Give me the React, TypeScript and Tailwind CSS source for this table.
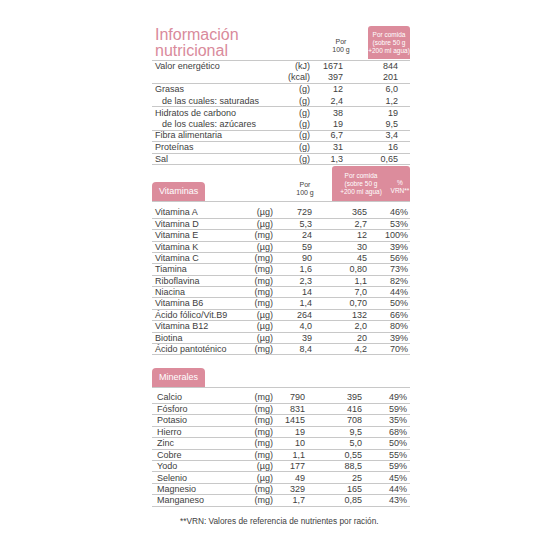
import React from 'react'

type NRow = { label: string; unit: string; per100: string; meal: string; indent?: boolean; line?: boolean }
type VRow = [string, string, string, string, string]

const nutrients: NRow[] = [
  { label: 'Valor energético', unit: '(kJ)', per100: '1671', meal: '844' },
  { label: '', unit: '(kcal)', per100: '397', meal: '201', line: true },
  { label: 'Grasas', unit: '(g)', per100: '12', meal: '6,0' },
  { label: 'de las cuales: saturadas', unit: '(g)', per100: '2,4', meal: '1,2', indent: true, line: true },
  { label: 'Hidratos de carbono', unit: '(g)', per100: '38', meal: '19' },
  { label: 'de los cuales: azúcares', unit: '(g)', per100: '19', meal: '9,5', indent: true, line: true },
  { label: 'Fibra alimentaria', unit: '(g)', per100: '6,7', meal: '3,4', line: true },
  { label: 'Proteínas', unit: '(g)', per100: '31', meal: '16', line: true },
  { label: 'Sal', unit: '(g)', per100: '1,3', meal: '0,65', line: true },
]

const vitamins: VRow[] = [
  ['Vitamina A', '(µg)', '729', '365', '46%'],
  ['Vitamina D', '(µg)', '5,3', '2,7', '53%'],
  ['Vitamina E', '(mg)', '24', '12', '100%'],
  ['Vitamina K', '(µg)', '59', '30', '39%'],
  ['Vitamina C', '(mg)', '90', '45', '56%'],
  ['Tiamina', '(mg)', '1,6', '0,80', '73%'],
  ['Riboflavina', '(mg)', '2,3', '1,1', '82%'],
  ['Niacina', '(mg)', '14', '7,0', '44%'],
  ['Vitamina B6', '(mg)', '1,4', '0,70', '50%'],
  ['Ácido fólico/Vit.B9', '(µg)', '264', '132', '66%'],
  ['Vitamina B12', '(µg)', '4,0', '2,0', '80%'],
  ['Biotina', '(µg)', '39', '20', '39%'],
  ['Ácido pantoténico', '(mg)', '8,4', '4,2', '70%'],
]

const minerals: VRow[] = [
  ['Calcio', '(mg)', '790', '395', '49%'],
  ['Fósforo', '(mg)', '831', '416', '59%'],
  ['Potasio', '(mg)', '1415', '708', '35%'],
  ['Hierro', '(mg)', '19', '9,5', '68%'],
  ['Zinc', '(mg)', '10', '5,0', '50%'],
  ['Cobre', '(mg)', '1,1', '0,55', '55%'],
  ['Yodo', '(µg)', '177', '88,5', '59%'],
  ['Selenio', '(µg)', '49', '25', '45%'],
  ['Magnesio', '(mg)', '329', '165', '44%'],
  ['Manganeso', '(mg)', '1,7', '0,85', '43%'],
]

const Tab = ({ children }: { children: React.ReactNode }) => (
  <div className="w-[53px] h-[19px] self-end rounded-t-[4px] bg-[#dc8c9c] text-white text-[9px] leading-[19px] pl-[7px] font-medium">
    {children}
  </div>
)

export default function App() {
  return (
    <div className="w-[546px] h-[546px] bg-white text-[#3e3e3e] font-['Liberation_Sans',Arial,sans-serif] overflow-hidden">
      <div className="ml-[152px] w-[258px] pt-[26px]">
        {/* Informacion nutricional */}
        <div className="flex h-[35px] border-b border-[#c8c8c8]">
          <div className="flex-1 pl-[3px] pt-[1px] text-[16px] leading-[16px] text-[#d98a9b]">
            Información
            <br />
            nutricional
          </div>
          <div className="w-[26px] self-end mb-[6px] text-center text-[7px] leading-[8px]">
            Por
            <br />
            100 g
          </div>
          <div className="w-[14px]" />
          <div className="w-[42px] h-[33px] rounded-t-[3px] bg-[#dc8c9c] text-white text-[6.5px] leading-[8px] text-center flex flex-col justify-center items-center whitespace-nowrap">
            <span>Por comida</span>
            <span>(sobre 50 g</span>
            <span>+200 ml agua)</span>
          </div>
        </div>
        {nutrients.map((r, i) => (
          <div
            key={i}
            className={`flex h-[11.6px] text-[9px] leading-[11px] items-center ${r.line ? 'border-b border-[#c8c8c8]' : ''}`}
          >
            <div className={`w-[118px] whitespace-nowrap ${r.indent ? 'pl-[10px]' : 'pl-[3px]'}`}>{r.label}</div>
            <div className="w-[40px] text-right">{r.unit}</div>
            <div className="w-[33px] text-right">{r.per100}</div>
            <div className="w-[55px] text-right">{r.meal}</div>
          </div>
        ))}

        {/* Vitaminas */}
        <div className="flex h-[36px] mt-[1px] border-b border-[#c8c8c8]">
          <Tab>Vitaminas</Tab>
          <div className="w-[87px]" />
          <div className="w-[26px] self-end mb-[4px] text-center text-[7px] leading-[8px]">
            Por
            <br />
            100 g
          </div>
          <div className="w-[14px]" />
          <div className="w-[78px] h-full rounded-t-[3px] bg-[#dc8c9c] text-white text-[6.5px] leading-[8px] flex items-center whitespace-nowrap">
            <div className="w-[58px] text-center flex flex-col">
              <span>Por comida</span>
              <span>(sobre 50 g</span>
              <span>+200 ml agua)</span>
            </div>
            <div className="flex-1 text-center flex flex-col pt-[7px]">
              <span>%</span>
              <span>VRN**</span>
            </div>
          </div>
        </div>
        <div className="pt-[5px]">
          {vitamins.map((r, i) => (
            <div key={i} className="flex h-[11.4px] text-[9px] leading-[10.4px] items-center border-b border-[#c8c8c8]">
              <div className="w-[81px] pl-[3px] whitespace-nowrap">{r[0]}</div>
              <div className="w-[40px] text-right">{r[1]}</div>
              <div className="w-[39px] text-right">{r[2]}</div>
              <div className="w-[55px] text-right">{r[3]}</div>
              <div className="w-[41px] text-right">{r[4]}</div>
            </div>
          ))}
        </div>

        {/* Minerales */}
        <div className="flex h-[20px] mt-[13px] border-b border-[#c8c8c8]">
          <Tab>Minerales</Tab>
        </div>
        <div className="pt-[4px]">
          {minerals.map((r, i) => (
            <div key={i} className="flex h-[11.44px] text-[9px] leading-[10.4px] items-center border-b border-[#c8c8c8]">
              <div className="w-[81px] pl-[5px] whitespace-nowrap">{r[0]}</div>
              <div className="w-[40px] text-right">{r[1]}</div>
              <div className="w-[32px] text-right">{r[2]}</div>
              <div className="w-[57px] text-right">{r[3]}</div>
              <div className="w-[45px] text-right">{r[4]}</div>
            </div>
          ))}
        </div>

        <div className="mt-[9px] pl-[28px] text-[8.3px] leading-[10px] whitespace-nowrap">
          **VRN: Valores de referencia de nutrientes por ración.
        </div>
      </div>
    </div>
  )
}
